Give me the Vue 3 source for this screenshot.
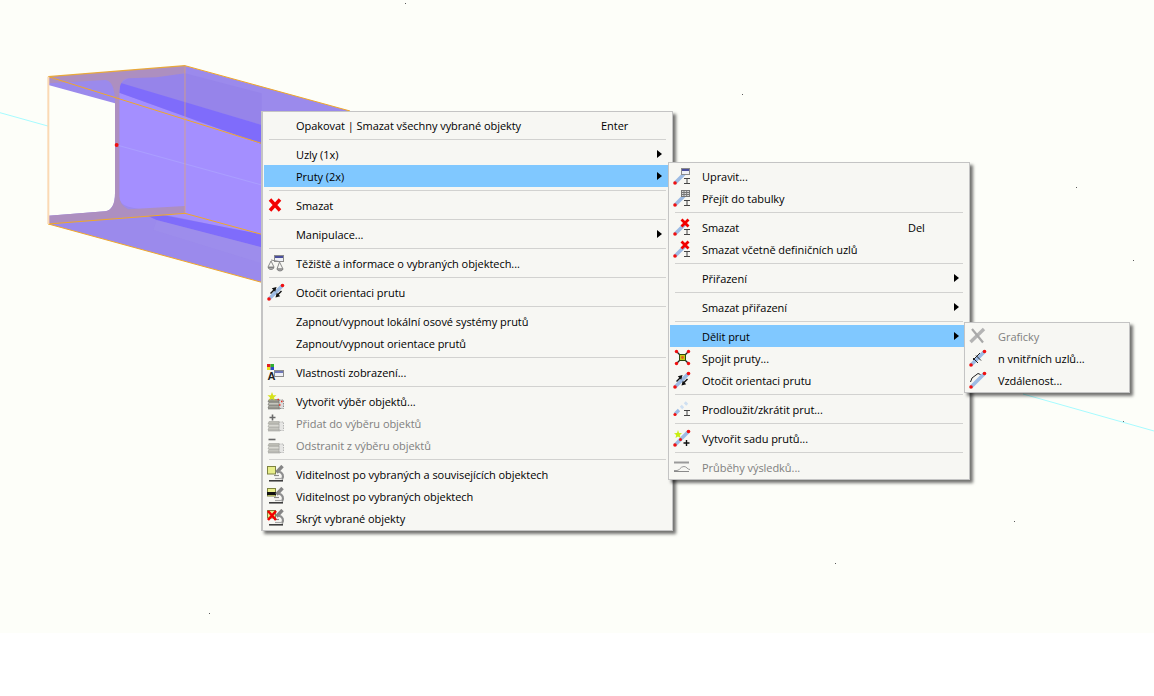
<script setup>
const mainMenu = [
  { label: 'Opakovat | Smazat všechny vybrané objekty', key: 'Enter' },
  { sep: true },
  { label: 'Uzly (1x)', more: true },
  { label: 'Pruty (2x)', more: true, active: true },
  { sep: true },
  { label: 'Smazat', icon: 'x' },
  { sep: true },
  { label: 'Manipulace...', more: true },
  { sep: true },
  { label: 'Těžiště a informace o vybraných objektech...', icon: 'scales' },
  { sep: true },
  { label: 'Otočit orientaci prutu', icon: 'flip' },
  { sep: true },
  { label: 'Zapnout/vypnout lokální osové systémy prutů' },
  { label: 'Zapnout/vypnout orientace prutů' },
  { sep: true },
  { label: 'Vlastnosti zobrazení...', icon: 'display' },
  { sep: true },
  { label: 'Vytvořit výběr objektů...', icon: 'sel-new' },
  { label: 'Přidat do výběru objektů', icon: 'sel-add', off: true },
  { label: 'Odstranit z výběru objektů', icon: 'sel-del', off: true },
  { sep: true },
  { label: 'Viditelnost po vybraných a souvisejících objektech', icon: 'vis-all' },
  { label: 'Viditelnost po vybraných objektech', icon: 'vis-sel' },
  { label: 'Skrýt vybrané objekty', icon: 'vis-hide' },
]

const memberMenu = [
  { label: 'Upravit...', icon: 'm-edit' },
  { label: 'Přejít do tabulky', icon: 'm-table' },
  { sep: true },
  { label: 'Smazat', icon: 'm-del', key: 'Del' },
  { label: 'Smazat včetně definičních uzlů', icon: 'm-del' },
  { sep: true },
  { label: 'Přiřazení', more: true },
  { sep: true },
  { label: 'Smazat přiřazení', more: true },
  { sep: true },
  { label: 'Dělit prut', more: true, active: true },
  { label: 'Spojit pruty...', icon: 'join' },
  { label: 'Otočit orientaci prutu', icon: 'flip' },
  { sep: true },
  { label: 'Prodloužit/zkrátit prut...', icon: 'extend' },
  { sep: true },
  { label: 'Vytvořit sadu prutů...', icon: 'set' },
  { sep: true },
  { label: 'Průběhy výsledků...', icon: 'results', off: true },
]

const divideMenu = [
  { label: 'Graficky', icon: 'graphic', off: true },
  { label: 'n vnitřních uzlů...', icon: 'nodes' },
  { label: 'Vzdálenost...', icon: 'distance' },
]

const menus = [
  { name: 'menu-main', rows: mainMenu },
  { name: 'menu-member', rows: memberMenu },
  { name: 'menu-divide', rows: divideMenu },
]

const specks = [
  [405, 3], [742, 94], [1076, 187], [1133, 260], [1123, 421],
  [1014, 521], [835, 563], [209, 613],
]
</script>

<template>
  <div class="page">
    <svg width="0" height="0" class="defs">
      <defs>
        <g id="bar">
          <path d="M2 16 15.500 2.500" stroke="#9dbbe4" stroke-width="3.600" />
          <circle cx="2" cy="16" r="1.800" fill="#f01010" />
          <circle cx="15.500" cy="2.500" r="1.800" fill="#f01010" />
        </g>
        <g id="member">
          <path d="M2 16 12 6" stroke="#9dbbe4" stroke-width="3.600" />
          <circle cx="2" cy="16" r="1.800" fill="#f01010" />
          <path d="M11 11.500h6M14 11.500v5M11 16.500h6" stroke="#444" fill="none" />
        </g>
        <g id="stack">
          <path d="M12 8h4.500v8.500h-4.500z" fill="#dcdcdc" stroke="#8e8e8e" stroke-dasharray="1.500 1" />
          <path d="M2 7.500h10v2.500H1z" fill="#9a9a90" stroke="#70706a" stroke-width=".6" />
          <path d="M2 10.500h10V13H1z" fill="#c6c6be" stroke="#70706a" stroke-width=".6" />
          <path d="M2 13.500h10V16H1z" fill="#a8a8a0" stroke="#70706a" stroke-width=".6" />
          <path d="M1 16.800h12" stroke="#70706a" />
        </g>
        <g id="scope">
          <path d="M15.500 1 9.500 7.500" stroke="#858585" stroke-width="3.400" />
          <path d="M11.500 6.500c4.500 1 5.500 4.500 3.500 8" stroke="#8e8e8e" stroke-width="2.200" fill="none" />
          <path d="M7 10.500h5" stroke="#8a8a8a" stroke-width="1.200" />
          <path d="M8 13.500h7" stroke="#a8a8a8" stroke-width="1.200" />
          <path d="M2 15.800h14" stroke="#333" stroke-width="1.500" />
        </g>
        <g id="flipbar">
          <use href="#bar" />
          <path d="M3.500 10.500 8 6" stroke="#111" stroke-width="1.400" />
          <path d="M9.500 4 4.800 5.300 8.200 8.700z" fill="#111" />
          <path d="M14.500 8 10 12.500" stroke="#111" stroke-width="1.400" />
          <path d="M8.500 14.500 13.200 13.200 9.800 9.800z" fill="#111" />
        </g>
        <g id="i-x">
          <path d="M3 3.500 13 14.500M13 3.500 3 14.500" stroke="#f20000" stroke-width="3.400" />
        </g>
        <g id="i-scales">
          <rect x="7.500" y="1.500" width="9" height="6" fill="#eef0f6" stroke="#8b8b8b" />
          <rect x="8" y="2" width="8" height="2" fill="#4a4f9c" />
          <path d="M4 7 1 13h6zM12.500 8 10 15h6z" fill="none" stroke="#8a8a8a" />
          <path d="M1 13.500c.5 2.500 5.500 2.500 6 0zM10 15c.5 2.500 5.500 2.500 6 0z" fill="#b4b4b4" stroke="#808080" />
          <path d="M4 6 12 7.500" stroke="#8a8a8a" />
        </g>
        <g id="i-flip"><use href="#flipbar" /></g>
        <g id="i-display">
          <rect x="0" y="1" width="3.500" height="3" fill="#e02020" />
          <rect x="3.500" y="1" width="3.500" height="3" fill="#30b030" />
          <rect x="0" y="4" width="3.500" height="3" fill="#e8e020" />
          <rect x="3.500" y="4" width="3.500" height="3" fill="#3048c8" />
          <text x="0.500" y="17" class="icon-letter">A</text>
          <rect x="7.500" y="7.500" width="9" height="6" fill="#eef0f6" stroke="#8b8b8b" />
          <rect x="8" y="8" width="8" height="2" fill="#6f78b8" />
        </g>
        <g id="i-sel-new">
          <use href="#stack" />
          <path d="M5 0 6.200 3.200 9.500 3.300 7 5.400 7.900 8.600 5 6.800 2.100 8.600 3 5.400.5 3.300 3.800 3.200z" fill="#d6e21c" />
          <path d="M10.500 7.500h1.500M14 9.500h1.500M12 13h1.500" stroke="#ef3020" stroke-width="1.500" />
        </g>
        <g id="i-sel-add">
          <g opacity=".62"><use href="#stack" /></g>
          <path d="M5.500 .5v6M2.500 3.500h6" stroke="#6a6a6a" stroke-width="1.600" />
        </g>
        <g id="i-sel-del">
          <g opacity=".62"><use href="#stack" /></g>
          <path d="M1.500 3.500h7" stroke="#6a6a6a" stroke-width="1.600" />
        </g>
        <g id="i-vis-all">
          <rect x=".5" y="1.500" width="8" height="7.500" fill="#e8ee8a" stroke="#7d8240" />
          <use href="#scope" />
        </g>
        <g id="i-vis-sel">
          <rect x=".5" y="1.500" width="8" height="7.500" fill="#e8ee8a" stroke="#7d8240" />
          <rect x="0" y="5" width="9" height="3" fill="#111" />
          <use href="#scope" />
        </g>
        <g id="i-vis-hide">
          <rect x=".5" y="1.500" width="8" height="7.500" fill="#e8ee8a" stroke="#7d8240" />
          <use href="#scope" />
          <path d="M1 2 9 11M9 2 1 11" stroke="#f20000" stroke-width="2.600" />
        </g>
        <g id="i-m-edit">
          <use href="#member" />
          <rect x="8.500" y="1.500" width="8" height="6" fill="#eef0f6" stroke="#8b8b8b" />
          <rect x="9" y="2" width="7" height="2" fill="#4a4f9c" />
        </g>
        <g id="i-m-table">
          <use href="#member" />
          <rect x="8.500" y="1.500" width="8" height="6" fill="#dadada" stroke="#777" />
          <path d="M8.500 3.500h8M8.500 5.500h8M11 1.500v6M13.700 1.500v6" stroke="#777" />
        </g>
        <g id="i-m-del">
          <use href="#member" />
          <path d="M8.500 1.500 15.500 8.500M15.500 1.500 8.500 8.500" stroke="#f20000" stroke-width="2.800" />
        </g>
        <g id="i-join">
          <path d="M4 3 15 14M15 3 4 14" stroke="#222" stroke-width="1.400" />
          <rect x="6.500" y="5.500" width="6" height="6" fill="#c4c81c" stroke="#2a4a10" />
          <circle cx="9.500" cy="8.500" r="1.400" fill="#e06018" />
          <g fill="#f01010">
            <circle cx="3.500" cy="2.500" r="1.700" />
            <circle cx="15.500" cy="2.500" r="1.700" />
            <circle cx="3.500" cy="14.500" r="1.700" />
            <circle cx="15.500" cy="14.500" r="1.700" />
          </g>
        </g>
        <g id="i-extend">
          <path d="M2 14 6 10" stroke="#9dbbe4" stroke-width="3.400" />
          <path d="M8 8 10 6M12 4.500 14 2.500" stroke="#cfe0f2" stroke-width="3.400" />
          <circle cx="2" cy="14.500" r="1.600" fill="#f01010" />
          <path d="M11 10.500h6M14 10.500v5M11 15.500h6" stroke="#444" fill="none" />
        </g>
        <g id="i-set">
          <use href="#bar" />
          <path d="M5 1 6 4 9 4.200 6.800 6.100 7.500 9 5 7.400 2.500 9 3.200 6.100 1 4.200 4 4z" fill="#c8ee10" />
          <circle cx="7.500" cy="10.500" r="1.500" fill="#f01010" />
          <path d="M13.500 11v6M10.500 14h6" stroke="#111" stroke-width="1.400" />
        </g>
        <g id="i-results">
          <path d="M1 4.500h15" stroke="#9a9a9a" stroke-width="2" />
          <path d="M1 12.500h3c3 0 3-4 7-4 3 0 3 3 6 3" stroke="#9a9a9a" fill="none" />
          <path d="M1 13.500h15" stroke="#8a8a8a" />
        </g>
        <g id="i-graphic">
          <path d="M1.500 15 15 2" stroke="#b4b4b4" stroke-width="3.400" />
          <path d="M3 2 14 15.500" stroke="#a8a8a8" stroke-width="2.200" />
        </g>
        <g id="i-nodes">
          <use href="#bar" />
          <path d="M4 9 9 14M7 6.500 12 11.500M4 11 11 4" stroke="#222" />
        </g>
        <g id="i-distance">
          <use href="#bar" />
          <path d="M1.500 11 3 7 9 2.500l2.500 1" stroke="#222" fill="none" />
        </g>
      </defs>
    </svg>

    <svg class="scene" width="1154" height="633" viewBox="0 0 1154 633">
      <g v-for="[x, y] in specks" :key="x">
        <rect :x="x" :y="y" width="1" height="1" fill="#5a5a5a" />
      </g>
      <path d="M0 112.700 116 145M1023 394 1154 431" stroke="#a6fbff" fill="none" />

      <!-- beam, traced at 3x of the reference, hence the scale -->
      <g transform="translate(0 50) scale(.33333)">
        <path d="M145 80 555 47 1050 183 1050 400 785 697 145 522z" fill="#9b8aec" />
        <path d="M145 105 345 160 345 430Q345 480 315 484L145 497z" fill="#fdfef9" />
        <path d="M358 128 785 282V556L385 470Q358 462 358 440z" fill="#a48fff" />
        <path d="M555 70 785 130V225L360 100 385 85z" fill="#9684ea" />
        <path d="M360 98 785 225V282L358 128z" fill="#7f6cfb" />
        <path d="M400 478 785 553V592L470 510z" fill="#7f6cfb" />
        <path d="M470 510 785 592V640L460 540z" fill="#a397ec" opacity=".25" />
        <path d="M145 80 555 47V70L470 82 385 85Q358 88 358 130V440Q358 462 385 478L555 468V490L145 522V497L315 484Q345 480 345 430V160Q345 92 315 90L230 95 145 100z" fill="#ad8fc0" />
        <path d="M350 285 785 405" stroke="#ab9fff" stroke-width="3" fill="none" />
        <path d="M145 80 1050 363M555 47 1050 183M145 522 555 490 785 553M145 522 785 697" stroke="#f0a828" stroke-width="3" fill="none" />
        <path d="M145 80 555 47" stroke="#e8a83a" stroke-width="4" fill="none" />
        <path d="M555 47V490" stroke="#e8a860" stroke-width="2" fill="none" />
        <path d="M145 80V522" stroke="#fbd9b4" stroke-width="6" fill="none" />
        <circle cx="350" cy="285" r="6" fill="#f01010" />
      </g>
    </svg>

    <div v-for="menu in menus" :key="menu.name" class="menu" :class="menu.name">
      <template v-for="(row, i) in menu.rows" :key="i">
        <div v-if="row.sep" class="sep"></div>
        <div v-else class="row" :class="{ active: row.active, off: row.off }">
          <span class="icon">
            <svg v-if="row.icon" width="18" height="18" viewBox="0 0 18 18">
              <use :href="'#i-' + row.icon" />
            </svg>
          </span>
          <span class="label">{{ row.label }}</span>
          <span v-if="row.key" class="key">{{ row.key }}</span>
          <span v-if="row.more" class="more"></span>
        </div>
      </template>
    </div>
  </div>
</template>

<style scoped>
.page {
  position: relative;
  width: 1154px;
  height: 696px;
  overflow: hidden;
  background: #fff;
  font-family: "Open Sans", Roboto, sans-serif;
  font-size: 11px;
  letter-spacing: -0.05px;
  line-height: 16px;
  color: #000;
}

.defs {
  position: absolute;
}

.scene {
  display: block;
  background: #fdfef9;
}

.icon-letter {
  font-family: "Liberation Sans", sans-serif;
  font-size: 11px;
  font-weight: 700;
  fill: #222;
}

.menu {
  position: absolute;
  box-sizing: border-box;
  padding: 2px 1px 1px;
  background: #f7f7f3;
  border: 1px solid #c4c4c4;
  box-shadow: 3px 3px 3px rgba(0, 0, 0, 0.55);
}

.menu-main {
  left: 261px;
  top: 111px;
  width: 412px;
  border-left-width: 2px;
}

.menu-member {
  left: 668px;
  top: 162px;
  width: 302px;
}

.menu-divide {
  left: 964px;
  top: 322px;
  width: 166px;
}

.row {
  position: relative;
  display: flex;
  align-items: center;
  height: 22px;
  white-space: nowrap;
}

.row.active {
  background: #80c8ff;
}

.row.off {
  color: #808080;
}

.icon {
  display: flex;
  flex: none;
  width: 29px;
  height: 18px;
  padding-left: 3px;
}

.label,
.key {
  flex: none;
  padding-top: 1px;
}

.menu-main .label {
  width: 305px;
}

.menu-member .label {
  width: 206px;
}

.more {
  position: absolute;
  top: 7px;
  right: 9px;
  border-left: 5px solid #000;
  border-top: 4px solid transparent;
  border-bottom: 4px solid transparent;
}

.sep {
  height: 1px;
  margin: 3px 5px;
  background: #d2d2d0;
}
</style>
